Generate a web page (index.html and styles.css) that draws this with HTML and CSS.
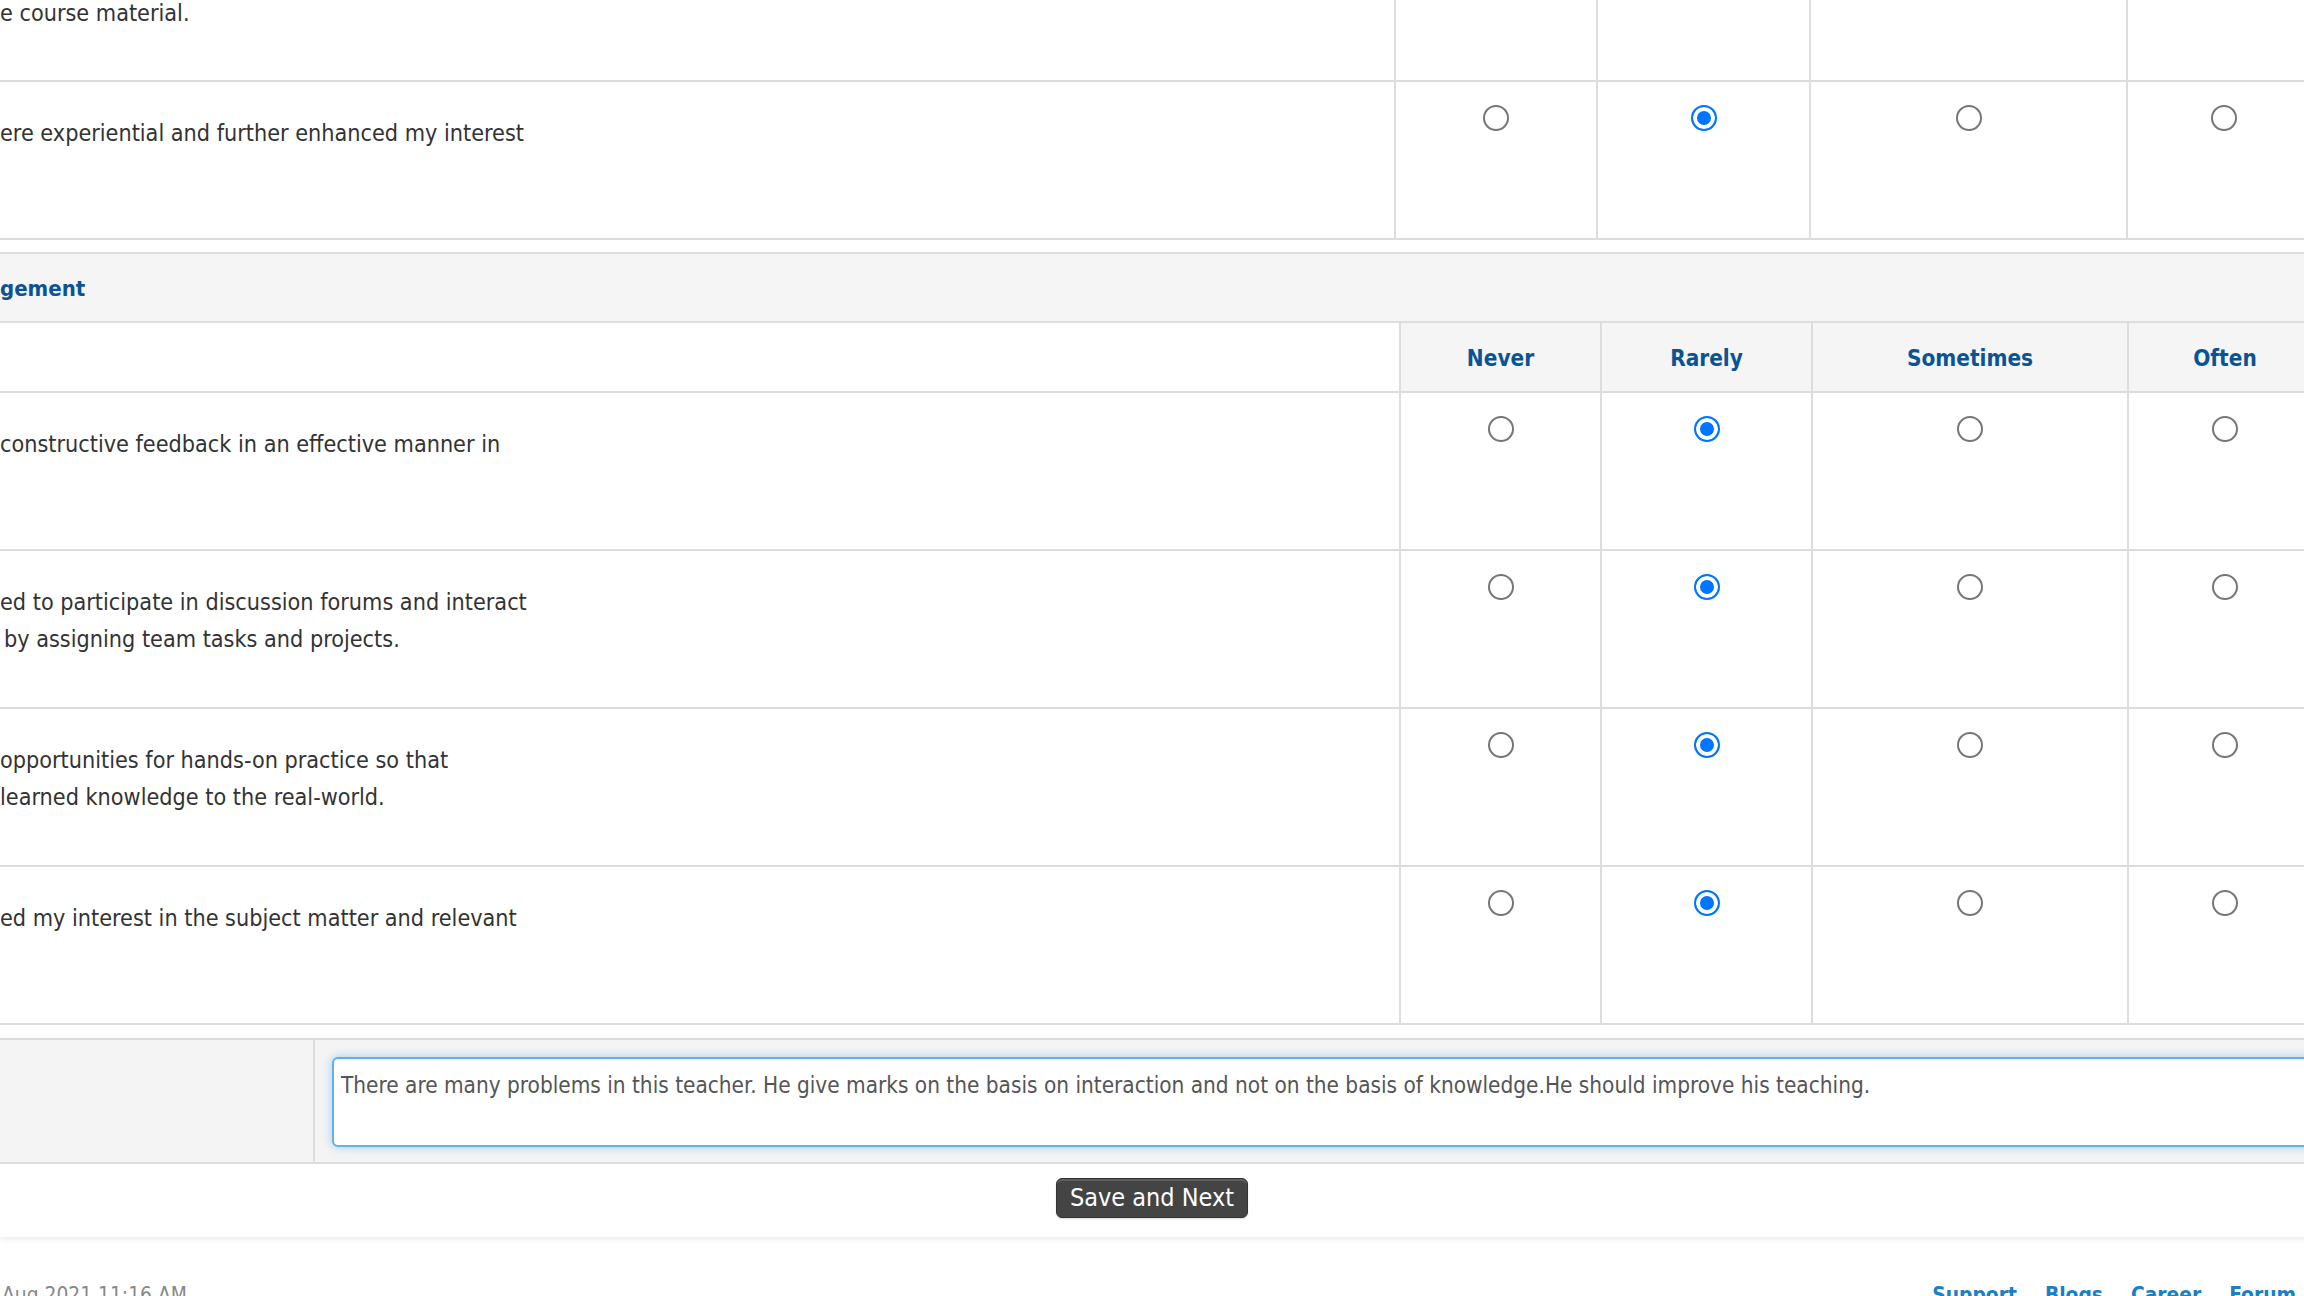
FILE: index.html
```html
<!DOCTYPE html>
<html lang="en">
<head>
<meta charset="utf-8">
<title>Feedback</title>
<link rel="stylesheet" href="styles.css">
</head>
<body>
<main class="page">
  <section class="panel">
    <div class="row grid-a row-partial">
      <div class="q q-partial">e course material.</div>
      <div class="opt"></div>
      <div class="opt"></div>
      <div class="opt"></div>
      <div class="opt"></div>
    </div>
    <div class="row grid-a">
      <div class="q">ere experiential and further enhanced my interest</div>
      <div class="opt"><input class="radio" type="radio" name="r1"></div>
      <div class="opt"><input class="radio" type="radio" name="r1" checked></div>
      <div class="opt"><input class="radio" type="radio" name="r1"></div>
      <div class="opt"><input class="radio" type="radio" name="r1"></div>
    </div>

    <div class="section-title">gement</div>

    <div class="row grid-b head">
      <div class="q"></div>
      <div class="opt th">Never</div>
      <div class="opt th">Rarely</div>
      <div class="opt th">Sometimes</div>
      <div class="opt th">Often</div>
    </div>
    <div class="row grid-b">
      <div class="q">constructive feedback in an effective manner in</div>
      <div class="opt"><input class="radio" type="radio" name="r2"></div>
      <div class="opt"><input class="radio" type="radio" name="r2" checked></div>
      <div class="opt"><input class="radio" type="radio" name="r2"></div>
      <div class="opt"><input class="radio" type="radio" name="r2"></div>
    </div>
    <div class="row grid-b">
      <div class="q"><span class="line">ed to participate in discussion forums and interact</span><span class="line indent">by assigning team tasks and projects.</span></div>
      <div class="opt"><input class="radio" type="radio" name="r3"></div>
      <div class="opt"><input class="radio" type="radio" name="r3" checked></div>
      <div class="opt"><input class="radio" type="radio" name="r3"></div>
      <div class="opt"><input class="radio" type="radio" name="r3"></div>
    </div>
    <div class="row grid-b">
      <div class="q"><span class="line">opportunities for hands-on practice so that</span><span class="line">learned knowledge to the real-world.</span></div>
      <div class="opt"><input class="radio" type="radio" name="r4"></div>
      <div class="opt"><input class="radio" type="radio" name="r4" checked></div>
      <div class="opt"><input class="radio" type="radio" name="r4"></div>
      <div class="opt"><input class="radio" type="radio" name="r4"></div>
    </div>
    <div class="row grid-b">
      <div class="q">ed my interest in the subject matter and relevant</div>
      <div class="opt"><input class="radio" type="radio" name="r5"></div>
      <div class="opt"><input class="radio" type="radio" name="r5" checked></div>
      <div class="opt"><input class="radio" type="radio" name="r5"></div>
      <div class="opt"><input class="radio" type="radio" name="r5"></div>
    </div>

    <div class="comment">
      <div class="comment-label"></div>
      <div class="comment-field">
        <textarea class="comment-box">There are many problems in this teacher. He give marks on the basis on interaction and not on the basis of knowledge.He should improve his teaching.</textarea>
      </div>
    </div>

    <div class="actions">
      <button class="btn-save" type="button">Save and Next</button>
    </div>
  </section>

  <footer class="footer">
    <span class="updated">Aug 2021 11:16 AM</span>
    <nav class="links">
      <a class="link" href="#">Support</a>
      <a class="link" href="#">Blogs</a>
      <a class="link" href="#">Career</a>
      <a class="link" href="#">Forum</a>
    </nav>
  </footer>
</main>
</body>
</html>
```

FILE: styles.css
```css
* {
  box-sizing: border-box;
}

html, body {
  margin: 0;
  padding: 0;
  background: #ffffff;
  overflow: hidden;
}

body {
  font-family: "DejaVu Sans Condensed", "DejaVu Sans", Verdana, sans-serif;
  font-stretch: condensed;
  font-size: 22.4px;
  line-height: 36.8px;
  color: #333333;
}

.page {
  width: 2340px;
}

.panel {
  background: #ffffff;
  box-shadow: 0 3px 5px rgba(0, 0, 0, 0.07);
}

.row {
  display: grid;
  border-bottom: 2px solid #dddddd;
}

.grid-a {
  grid-template-columns: 1394px 202px 213px 317px 194px;
}

.grid-b {
  grid-template-columns: 1399px 201px 211px 316px 194px;
}

.row > div {
  height: 156px;
}

.row-partial > div {
  height: 80px;
}

.head > div {
  height: 68px;
}

.q {
  padding-top: 33px;
  white-space: nowrap;
  font-size: 23.2px;
  color: #333333;
}

.q-partial {
  padding-top: 0;
  line-height: 25.6px;
}

.line {
  display: block;
}

.indent {
  padding-left: 4px;
}

.opt {
  border-left: 2px solid #dddddd;
  display: flex;
  justify-content: center;
  align-items: flex-start;
  padding-top: 23px;
}

.th {
  background: #f5f5f5;
  padding-top: 17px;
  font-weight: bold;
  color: #0b5394;
}

.section-title {
  margin-top: 12px;
  height: 71px;
  padding-top: 17px;
  border-top: 2px solid #dddddd;
  border-bottom: 2px solid #dddddd;
  background: #f5f5f5;
  font-weight: bold;
  font-size: 22px;
  color: #0b5394;
  white-space: nowrap;
}

.radio {
  -webkit-appearance: none;
  appearance: none;
  width: 26px;
  height: 26px;
  margin: 0;
  border: 2px solid #767676;
  border-radius: 50%;
  background: #ffffff;
}

.radio:checked {
  border-color: #0075ff;
  background: #0075ff;
  box-shadow: inset 0 0 0 4px #ffffff;
}

.comment {
  margin-top: 13px;
  display: grid;
  grid-template-columns: 315px 1fr;
  border-top: 2px solid #dddddd;
  border-bottom: 2px solid #dddddd;
  background: #f4f4f4;
}

.comment-label {
  border-right: 2px solid #dddddd;
  height: 122px;
}

.comment-field {
  padding: 17px 0 15px 17px;
}

.comment-box {
  display: block;
  width: 100%;
  height: 90px;
  margin: 0;
  padding: 8px 7px;
  border: 2px solid #66afe9;
  border-radius: 6px;
  background: #ffffff;
  box-shadow: inset 0 1px 1px rgba(0, 0, 0, 0.075), 0 0 10px rgba(102, 175, 233, 0.6);
  font-family: inherit;
  font-stretch: condensed;
  font-size: 22.4px;
  line-height: 36.8px;
  color: #555555;
  resize: none;
  overflow: hidden;
  outline: none;
}

.actions {
  display: flex;
  justify-content: center;
  padding: 14px 36px 19px 0;
}

.btn-save {
  height: 40px;
  padding: 0 13px;
  border: 1px solid #333333;
  border-radius: 6px;
  background: #444444;
  box-shadow: inset 0 2px 0 #5e5e5e, 0 1px 2px rgba(0, 0, 0, 0.15);
  color: #ffffff;
  font-family: inherit;
  font-stretch: condensed;
  font-size: 25px;
  line-height: 36px;
}

.footer {
  display: flex;
  justify-content: space-between;
  align-items: flex-start;
  padding: 43px 44px 0 2px;
  font-size: 20.8px;
  line-height: 30px;
}

.updated {
  color: #888888;
}

.links {
  display: flex;
  gap: 28px;
}

.link {
  color: #1a7fc4;
  font-weight: bold;
  text-decoration: none;
}
```
